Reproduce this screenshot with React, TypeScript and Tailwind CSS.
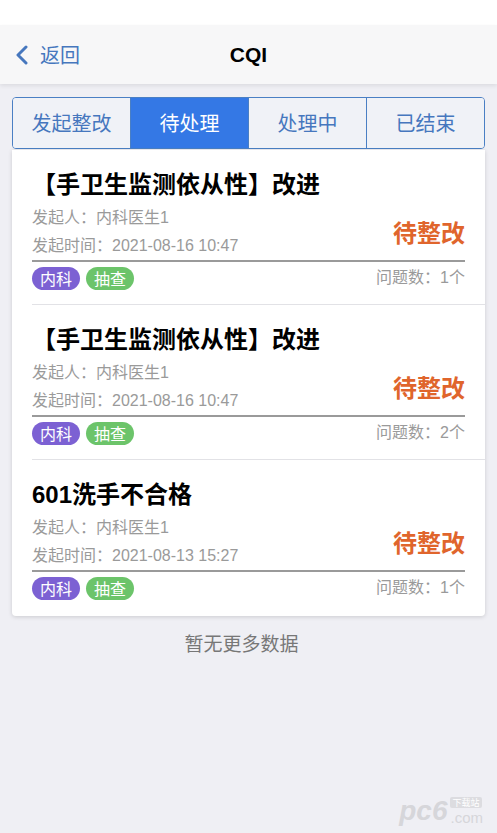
import React from "react";

const items = [
  { title: "【手卫生监测依从性】改进", time: "2021-08-16 10:47", count: "1个" },
  { title: "【手卫生监测依从性】改进", time: "2021-08-16 10:47", count: "2个" },
  { title: "601洗手不合格", time: "2021-08-13 15:27", count: "1个" },
];

const tabs = ["发起整改", "待处理", "处理中", "已结束"];

const MIX = '"Liberation Sans", "Noto Sans CJK SC", sans-serif';

export default function App() {
  return (
    <div
      className="relative min-h-[833px] w-full bg-[#efeff4] overflow-hidden"
      style={{ fontFamily: '"Noto Sans CJK SC", "Noto Sans", sans-serif' }}
    >
      <div className="h-[25px] bg-white" />
      <div className="relative flex h-[59px] items-center bg-[#f7f7f8] shadow-[0_2px_4px_rgba(0,0,0,0.08)]">
        <div className="flex items-center pl-[14px]">
          <svg width="16" height="20" viewBox="0 0 16 20" className="mr-[10px]">
            <path d="M12 2 L4 10 L12 18" fill="none" stroke="#4677be" strokeWidth="3" strokeLinecap="round" strokeLinejoin="round" />
          </svg>
          <span className="text-[20px] leading-none text-[#4677be]">返回</span>
        </div>
        <div
          className="absolute left-0 right-0 text-center text-[21px] font-bold text-black pointer-events-none"
          style={{ fontFamily: '"Liberation Sans", Arial, sans-serif' }}
        >
          CQI
        </div>
      </div>

      <div className="mx-[12px] mt-[13px] flex h-[52px] overflow-hidden rounded-[4px] border-[1.5px] border-[#4a7fc4]">
        {tabs.map((t, i) => (
          <div
            key={t}
            className={
              "flex flex-1 items-center justify-center text-[20px] " +
              (i === 1 ? "bg-[#3478e5] text-white" : "bg-[#f0f2f7] text-[#4677be]") +
              (i > 0 ? " border-l-[1.5px] border-[#4a7fc4]" : "")
            }
          >
            {t}
          </div>
        ))}
      </div>

      <div className="mx-[12px] mt-px rounded-b-[4px] bg-white pb-[2px] shadow-[0_1px_4px_rgba(0,0,0,0.15)]">
        {items.map((it, idx) => (
          <div key={idx} className={idx < items.length - 1 ? "ml-[20px] border-b border-[#e2e2e6]" : "ml-[20px]"}>
            <div className="pr-[20px] pt-[20px] pb-[14px]">
              <div
                className="h-[30px] text-[24px] font-bold leading-[30px] text-black"
                style={{ fontFamily: MIX }}
              >
                {it.title}
              </div>
              <div className="mt-[4px] flex items-center border-b-2 border-[#9a9a9a]">
                <div className="flex-1" style={{ fontFamily: MIX }}>
                  <div className="h-[28px] text-[16px] leading-[28px] text-[#9a9a9a]">发起人：内科医生1</div>
                  <div className="h-[28px] text-[16px] leading-[28px] text-[#9a9a9a]">发起时间：{it.time}</div>
                </div>
                <div className="text-[24px] font-semibold text-[#e0652c]">待整改</div>
              </div>
              <div className="mt-[4px] flex h-[24px] items-center">
                <span className="flex h-[23px] items-center rounded-full bg-[#7c61d3] px-[8px] text-[16px] text-white">内科</span>
                <span className="ml-[6px] flex h-[23px] items-center rounded-full bg-[#6cc46a] px-[8px] text-[16px] text-white">抽查</span>
                <span className="ml-auto text-[16px] text-[#9a9a9a]" style={{ fontFamily: MIX }}>
                  问题数：{it.count}
                </span>
              </div>
            </div>
          </div>
        ))}
      </div>

      <div className="mt-[14px] pr-[14px] text-center text-[19px] leading-[26px] text-[#777777]">暂无更多数据</div>

      <div
        className="absolute right-[14px] bottom-[8px] flex items-end gap-[3px] text-[#d6d6da]"
        style={{ fontFamily: '"Liberation Sans", Arial, sans-serif' }}
      >
        <span className="text-[28px] font-bold italic leading-[28px]">pc6</span>
        <span className="flex flex-col items-start gap-[2px]">
          <span
            className="rounded-[2px] bg-[#dcdce0] px-[2px] text-[9px] leading-[11px] text-white"
            style={{ fontFamily: '"Noto Sans CJK SC", sans-serif' }}
          >
            下载站
          </span>
          <span className="text-[15px] leading-[15px]">.com</span>
        </span>
      </div>
    </div>
  );
}
